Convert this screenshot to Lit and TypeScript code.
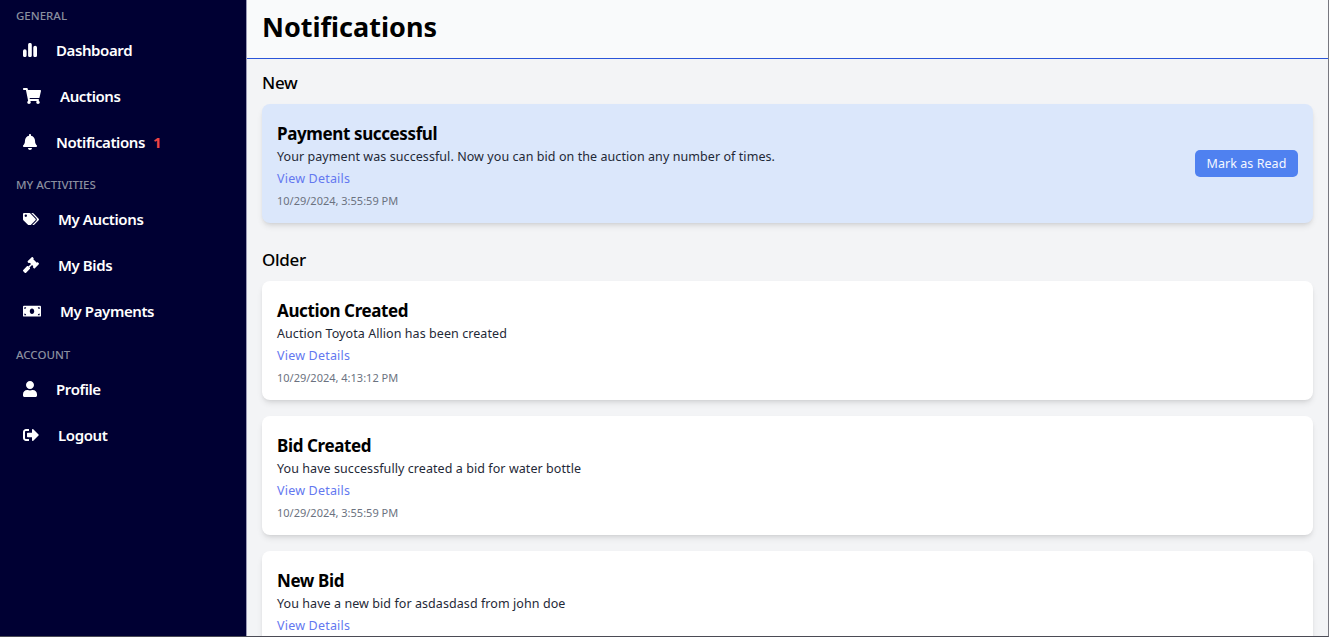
import { LitElement, html, css, svg } from "lit";
import { customElement } from "lit/decorators.js";

const icons: Record<string, { vb: string; d: string }> = {
  chart: { vb: "0 0 14 14", d: "M0 8a1.8 1.8 0 0 1 3.6 0v4.4a1.6 1.6 0 0 1-1.8 1.6A1.6 1.6 0 0 1 0 12.4zM5.1 1.8a1.85 1.85 0 0 1 3.7 0v10.6A1.6 1.6 0 0 1 6.95 14a1.6 1.6 0 0 1-1.85-1.6zM10.3 4.6a1.85 1.85 0 0 1 3.7 0v7.8a1.6 1.6 0 0 1-1.85 1.6 1.6 1.6 0 0 1-1.85-1.6z" },
  cart: { vb: "0 0 576 512", d: "M528.12 301.319l47.273-208C578.806 78.301 567.391 64 551.99 64H159.208l-9.166-44.81C147.758 8.021 137.93 0 126.529 0H24C10.745 0 0 10.745 0 24v16c0 13.255 10.745 24 24 24h69.883l70.248 343.435C147.325 417.1 136 435.222 136 456c0 30.928 25.072 56 56 56s56-25.072 56-56c0-15.674-6.447-29.835-16.824-40h209.647C430.447 426.165 424 440.326 424 456c0 30.928 25.072 56 56 56s56-25.072 56-56c0-22.172-12.888-41.332-31.579-50.405l5.517-24.276c3.413-15.018-8.002-29.319-23.403-29.319H218.117l-6.545-32h293.145c11.206 0 20.92-7.754 23.403-18.681z" },
  bell: { vb: "0 0 448 512", d: "M224 512c35.32 0 63.97-28.65 63.97-64H160.03c0 35.35 28.65 64 63.97 64zm215.39-149.71c-19.32-20.76-55.47-51.99-55.47-154.29 0-77.7-54.48-139.9-127.94-155.16V32c0-17.67-14.32-32-31.98-32s-31.98 14.33-31.98 32v20.84C118.56 68.1 64.08 130.3 64.08 208c0 102.3-36.15 133.53-55.47 154.29-6 6.45-8.66 14.16-8.61 21.71.11 16.4 12.98 32 32.1 32h383.8c19.12 0 32-15.6 32.1-32 .05-7.55-2.61-15.27-8.61-21.71z" },
  tags: { vb: "0 0 640 512", d: "M497.941 225.941L286.059 14.059A48 48 0 0 0 252.118 0H48C21.49 0 0 21.49 0 48v204.118a48 48 0 0 0 14.059 33.941l211.882 211.882c18.744 18.745 49.136 18.746 67.882 0l204.118-204.118c18.745-18.745 18.745-49.137 0-67.882zM112 160c-26.51 0-48-21.49-48-48s21.49-48 48-48 48 21.49 48 48-21.49 48-48 48zm513.941 133.823L421.823 497.941c-18.745 18.745-49.137 18.745-67.882 0l-.36-.36L527.64 323.522c16.999-16.999 26.36-39.6 26.36-63.64s-9.362-46.641-26.36-63.64L331.397 0h48.721a48 48 0 0 1 33.941 14.059l211.882 211.882c18.745 18.745 18.745 49.137 0 67.882z" },
  gavel: { vb: "0 0 512 512", d: "M504.971 199.362l-22.627-22.627c-9.373-9.373-24.569-9.373-33.941 0l-5.657 5.657L329.608 69.255l5.657-5.657c9.373-9.373 9.373-24.569 0-33.941L312.638 7.029c-9.373-9.373-24.569-9.373-33.941 0L154.246 131.48c-9.373 9.373-9.373 24.569 0 33.941l22.627 22.627c9.373 9.373 24.569 9.373 33.941 0l5.657-5.657 39.598 39.598-81.04 81.04-5.657-5.657c-12.497-12.497-32.758-12.497-45.255 0L9.373 412.118c-12.497 12.497-12.497 32.758 0 45.255l45.255 45.255c12.497 12.497 32.758 12.497 45.255 0l114.745-114.745c12.497-12.497 12.497-32.758 0-45.255l-5.657-5.657 81.04-81.04 39.598 39.598-5.657 5.657c-9.373 9.373-9.373 24.569 0 33.941l22.627 22.627c9.373 9.373 24.569 9.373 33.941 0l124.451-124.451c9.372-9.372 9.372-24.568 0-33.941z" },
  money: { vb: "0 0 640 512", d: "M608 64H32C14.33 64 0 78.33 0 96v320c0 17.67 14.33 32 32 32h576c17.67 0 32-14.33 32-32V96c0-17.67-14.33-32-32-32zM48 400v-64c35.35 0 64 28.65 64 64H48zm0-224v-64h64c0 35.35-28.65 64-64 64zm272 176c-44.19 0-80-42.99-80-96 0-53.02 35.82-96 80-96s80 42.98 80 96c0 53.03-35.83 96-80 96zm272 48h-64c0-35.35 28.65-64 64-64v64zm0-224c-35.35 0-64-28.65-64-64h64v64z" },
  user: { vb: "0 0 448 512", d: "M224 256c70.7 0 128-57.3 128-128S294.7 0 224 0 96 57.3 96 128s57.3 128 128 128zm89.6 32h-16.7c-22.2 10.2-46.9 16-72.9 16s-50.6-5.8-72.9-16h-16.7C60.2 288 0 348.2 0 422.4V464c0 26.5 21.5 48 48 48h352c26.5 0 48-21.5 48-48v-41.6c0-74.2-60.2-134.4-134.4-134.4z" },
  logout: { vb: "0 0 512 512", d: "M497 273L329 441c-15 15-41 4.5-41-17v-96H152c-13.3 0-24-10.7-24-24v-96c0-13.3 10.7-24 24-24h136V88c0-21.4 25.9-32 41-17l168 168c9.3 9.4 9.3 24.6 0 34zM192 436v-40c0-6.6-5.4-12-12-12H96c-17.7 0-32-14.3-32-32V160c0-17.7 14.3-32 32-32h84c6.6 0 12-5.4 12-12V76c0-6.6-5.4-12-12-12H96c-53 0-96 43-96 96v192c0 53 43 96 96 96h84c6.6 0 12-5.4 12-12z" },
};

interface NavItem { icon: string; label: string; w: number; gap: number; badge?: string }
const nav: { title: string; items: NavItem[] }[] = [
  { title: "GENERAL", items: [
    { icon: "chart", label: "Dashboard", w: 14, gap: 19 },
    { icon: "cart", label: "Auctions", w: 18, gap: 19 },
    { icon: "bell", label: "Notifications", w: 14, gap: 19, badge: "1" },
  ]},
  { title: "MY ACTIVITIES", items: [
    { icon: "tags", label: "My Auctions", w: 16, gap: 19 },
    { icon: "gavel", label: "My Bids", w: 16, gap: 19 },
    { icon: "money", label: "My Payments", w: 18, gap: 19 },
  ]},
  { title: "ACCOUNT", items: [
    { icon: "user", label: "Profile", w: 14, gap: 19 },
    { icon: "logout", label: "Logout", w: 16, gap: 19 },
  ]},
];

interface Note { title: string; body: string; time?: string }
const older: Note[] = [
  { title: "Auction Created", body: "Auction Toyota Allion has been created", time: "10/29/2024, 4:13:12 PM" },
  { title: "Bid Created", body: "You have successfully created a bid for water bottle", time: "10/29/2024, 3:55:59 PM" },
  { title: "New Bid", body: "You have a new bid for asdasdasd from john doe" },
];

@customElement("app-root")
export class AppRoot extends LitElement {
  static styles = css`
    :host {
      display: block;
      height: 637px;
      overflow: hidden;
      box-sizing: border-box;
      border-bottom: 1px solid #4b4b55;
      border-right: 1px solid #77777f;
      font-family: "Noto Sans", "Open Sans", sans-serif;
    }
    .shell { display: flex; height: 636px; }
    .side {
      width: 246px;
      flex: none;
      background: #000033;
      border-right: 1px solid #9a9ab5;
      padding-top: 8px;
      color: #fff;
    }
    .group { padding-bottom: 12px; }
    .group + .group { padding-bottom: 13px; }
    .sec {
      font-size: 11.5px;
      line-height: 15px;
      font-weight: 500;
      color: #8a8f9f;
      padding-left: 16px;
      margin-bottom: 4px;
    }
    .item {
      display: flex;
      align-items: center;
      height: 46px;
      padding-left: 23px;
      font-size: 15px;
      font-weight: 600;
      letter-spacing: -0.4px;
    }
    .item svg { flex: none; fill: #fff; display: block; }
    .badge { color: #ef4444; margin-left: 8px; font-weight: 700; }
    .main { flex: 1; min-width: 0; background: #f3f4f6; display: flex; flex-direction: column; }
    .head {
      height: 54px;
      flex: none;
      background: #f9fafb;
      border-bottom: 1px solid #2b55d9;
      display: flex;
      align-items: center;
      padding-left: 15px;
      padding-bottom: 4px;
    }
    h1 { margin: 0; font-size: 27px; line-height: 36px; font-weight: 700; color: #000; }
    .body { padding: 13px 15px 0; overflow: hidden; flex: 1; }
    h2 { margin: 0; font-size: 17px; line-height: 22px; font-weight: 500; color: #000; letter-spacing: -0.3px; }
    .list { display: flex; flex-direction: column; gap: 16px; margin-top: 10px; }
    .card {
      background: #fff;
      border-radius: 8px;
      box-shadow: 0 4px 6px -1px rgba(0,0,0,.1), 0 2px 4px -2px rgba(0,0,0,.1);
      padding: 0 15px;
      height: 119px;
      flex: none;
      box-sizing: border-box;
      display: flex;
      align-items: center;
      justify-content: space-between;
    }
    .card.new { background: #dbe7fb; margin-bottom: 26px; }
    .left { margin-top: 3px; }
    .t { font-size: 17px; line-height: 24px; font-weight: 700; color: #000; letter-spacing: -0.38px; }
    .b { font-size: 12.5px; line-height: 17px; color: #1f2937; letter-spacing: 0.07px; margin-top: 2px; }
    .l { font-size: 12.5px; line-height: 17px; color: #6478f0; margin-top: 5px; letter-spacing: 0.2px; display: block; text-decoration: none; }
    .d { font-size: 11px; line-height: 15px; color: #6b7280; margin-top: 6px; }
    button {
      border: none;
      background: #4f81f0;
      color: #f5f8ff;
      font: inherit;
      font-size: 12.5px;
      letter-spacing: 0.05px;
      height: 27px;
      width: 103px;
      padding: 0;
      border-radius: 5px;
    }
  `;

  private icon(n: NavItem) {
    const i = icons[n.icon];
    const [, , vw, vh] = i.vb.split(" ").map(Number);
    const h = (n.w * vh) / vw;
    return html`<svg viewBox=${i.vb} width=${n.w} height=${h} style="margin-right:${n.gap}px">${svg`<path d=${i.d}></path>`}</svg>`;
  }

  private card(c: Note, isNew = false) {
    return html`<div class="card ${isNew ? "new" : ""}">
      <div class="left">
        <div class="t">${c.title}</div>
        <div class="b">${c.body}</div>
        <a class="l" href="#">View Details</a>
        <div class="d">${c.time ?? html`&nbsp;`}</div>
      </div>
      ${isNew ? html`<button>Mark as Read</button>` : ""}
    </div>`;
  }

  render() {
    return html`<div class="shell">
      <aside class="side">
        ${nav.map((g) => html`<div class="group">
          <div class="sec">${g.title}</div>
          ${g.items.map((n) => html`<div class="item">
            ${this.icon(n)}<span>${n.label}</span>${n.badge ? html`<span class="badge">${n.badge}</span>` : ""}
          </div>`)}
        </div>`)}
      </aside>
      <main class="main">
        <header class="head"><h1>Notifications</h1></header>
        <div class="body">
          <h2>New</h2>
          <div class="list">
            ${this.card({ title: "Payment successful", body: "Your payment was successful. Now you can bid on the auction any number of times.", time: "10/29/2024, 3:55:59 PM" }, true)}
          </div>
          <h2>Older</h2>
          <div class="list">
            ${older.map((c) => this.card(c))}
          </div>
        </div>
      </main>
    </div>`;
  }
}
